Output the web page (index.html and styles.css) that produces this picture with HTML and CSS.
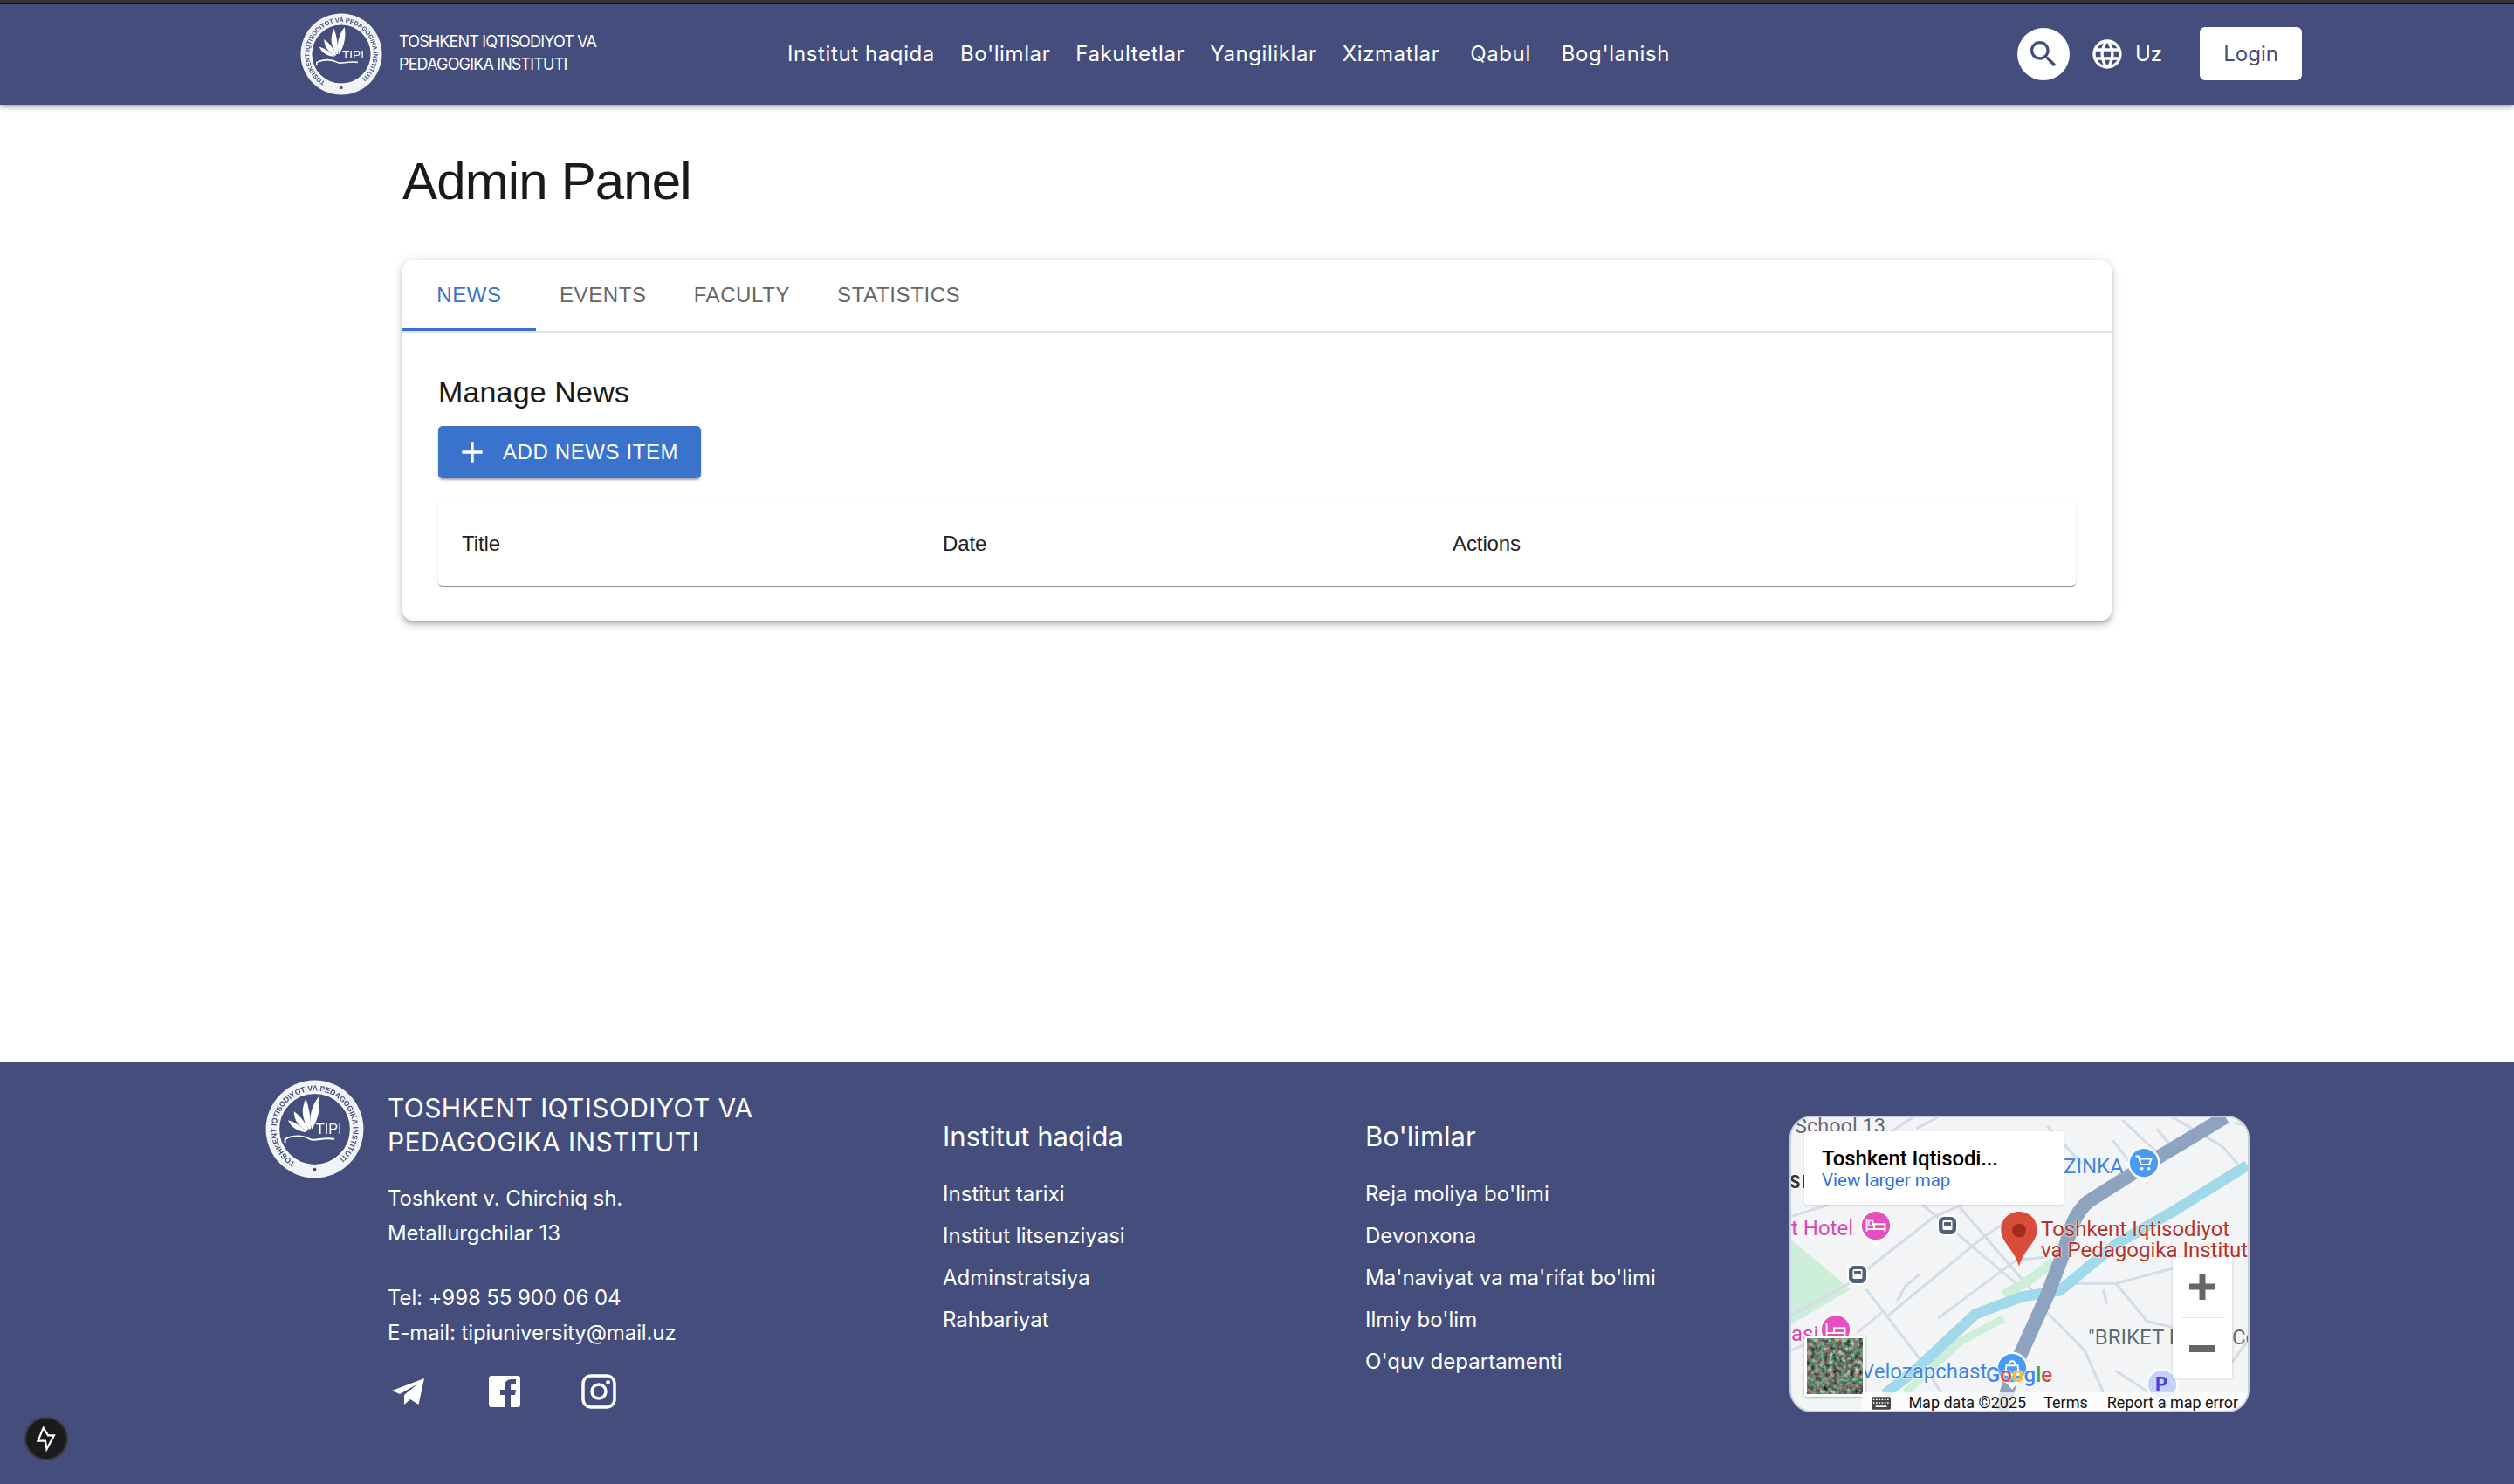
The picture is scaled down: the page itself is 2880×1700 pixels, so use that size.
FILE: index.html
```html
<!DOCTYPE html>
<html lang="uz">
<head>
<meta charset="utf-8">
<title>Admin Panel</title>
<link rel="stylesheet" href="styles.css">
</head>
<body>
<svg class="defs" width="0" height="0" aria-hidden="true">
  <defs>
    <path id="ringPath" d="M30.500 83.800A39 39 0 1 1 69.500 83.800"/>
    <filter id="sat" x="0" y="0" width="100%" height="100%" color-interpolation-filters="sRGB">
      <feTurbulence type="fractalNoise" baseFrequency=".2" numOctaves="3" seed="7"/>
      <feColorMatrix values="1.100 .3 0 0 -.27  .4 1 0 0 -.21  .5 .5 .1 0 -.12  0 0 0 0 1"/>
    </filter>
    <g id="seal">
      <circle cx="50" cy="50" r="49.500" fill="#f2f3f7"/>
      <circle cx="50" cy="50" r="36.500" fill="#444d7c" stroke="#fff" stroke-width="1.500"/>
      <text class="seal-ring" fill="#444d7c"><textPath href="#ringPath">TOSHKENT IQTISODIYOT VA PEDAGOGIKA INSTITUTI</textPath></text>
      <circle cx="50" cy="91" r="1.800" fill="#444d7c"/>
      <g fill="#fff">
        <path d="M47 50C44 38 46 28 54 17C56 28 54 40 47 50Z"/>
        <path d="M44 50C37 40 36 30 41 19C45 30 46 40 46 50Z"/>
        <path d="M42 52C34 47 29 41 29 32C36 37 41 44 44 51Z"/>
        <path d="M40 53C32 52 26 48 23 41C30 43 36 47 42 53Z"/>
      </g>
      <path d="M20 64V60C28 56 38 56 45 60C50 63 56 58 70 60" fill="none" stroke="#fff" stroke-width="1.700"/>
      <text x="51" y="55" class="seal-tipi" fill="#fff">TIPI</text>
    </g>
  </defs>
</svg>

<header class="topbar">
  <div class="topbar-inner">
    <a class="brand" href="#">
      <svg class="brand-seal" viewBox="0 0 100 100"><use href="#seal"/></svg>
      <span class="brand-name">TOSHKENT IQTISODIYOT VA<br>PEDAGOGIKA INSTITUTI</span>
    </a>
    <nav class="mainnav">
      <a href="#">Institut haqida</a>
      <a href="#">Bo'limlar</a>
      <a href="#">Fakultetlar</a>
      <a href="#">Yangiliklar</a>
      <a href="#">Xizmatlar</a>
      <a href="#" class="nav-qabul">Qabul</a>
      <a href="#" class="nav-bog">Bog'lanish</a>
    </nav>
    <div class="tools">
      <button class="search" aria-label="Search">
        <svg viewBox="0 0 24 24" class="search-icon"><path fill="#444d7c" d="M15.500 14h-.79l-.28-.27C15.410 12.590 16 11.110 16 9.500 16 5.910 13.090 3 9.500 3S3 5.910 3 9.500 5.910 16 9.500 16c1.610 0 3.090-.59 4.230-1.570l.27.28v.79l5 4.990L20.490 19l-4.990-5zm-6 0C7.010 14 5 11.990 5 9.500S7.010 5 9.500 5 14 7.010 14 9.500 11.990 14 9.500 14z"/></svg>
      </button>
      <span class="lang">
        <svg viewBox="0 0 24 24" class="globe"><path fill="#fff" d="M11.990 2C6.470 2 2 6.480 2 12s4.470 10 9.990 10C17.520 22 22 17.520 22 12S17.520 2 11.990 2zm6.930 6h-2.950c-.32-1.250-.78-2.450-1.380-3.560 1.840.63 3.370 1.910 4.330 3.560zM12 4.040c.83 1.200 1.480 2.530 1.910 3.960h-3.820c.43-1.430 1.080-2.760 1.910-3.960zM4.260 14C4.100 13.360 4 12.690 4 12s.1-1.360.26-2h3.380c-.08.66-.14 1.320-.14 2 0 .68.06 1.340.14 2H4.260zm.82 2h2.950c.32 1.250.78 2.450 1.380 3.560-1.840-.63-3.370-1.900-4.330-3.560zm2.950-8H5.080c.96-1.660 2.490-2.930 4.330-3.560C8.810 5.550 8.350 6.750 8.030 8zM12 19.960c-.83-1.200-1.480-2.530-1.910-3.960h3.820c-.43 1.430-1.080 2.760-1.910 3.960zM14.340 14H9.660c-.09-.66-.16-1.320-.16-2 0-.68.07-1.350.16-2h4.680c.09.650.16 1.320.16 2 0 .68-.07 1.340-.16 2zm.25 5.560c.6-1.110 1.060-2.310 1.380-3.560h2.950c-.96 1.650-2.490 2.930-4.330 3.560zM16.360 14c.08-.66.14-1.320.14-2 0-.68-.06-1.340-.14-2h3.380c.16.640.26 1.310.26 2s-.1 1.360-.26 2h-3.380z"/></svg>
        <span>Uz</span>
      </span>
      <button class="login">Login</button>
    </div>
  </div>
</header>

<main class="content">
  <h1 class="title">Admin Panel</h1>
  <section class="panel">
    <div class="tabs">
      <a class="tab tab-active" href="#">NEWS</a>
      <a class="tab" href="#">EVENTS</a>
      <a class="tab" href="#">FACULTY</a>
      <a class="tab" href="#">STATISTICS</a>
    </div>
    <div class="panel-body">
      <h2 class="subtitle">Manage News</h2>
      <button class="add">
        <svg viewBox="0 0 24 24" class="plus"><path d="M19 13h-6v6h-2v-6H5v-2h6V5h2v6h6z" fill="#fff"/></svg>
        ADD NEWS ITEM
      </button>
      <div class="table">
        <span class="th">Title</span>
        <span class="th">Date</span>
        <span class="th">Actions</span>
      </div>
    </div>
  </section>
</main>

<footer class="footer">
  <div class="footer-inner">
    <div class="f-about">
      <svg class="f-seal" viewBox="0 0 100 100"><use href="#seal"/></svg>
      <div class="f-info">
        <h3 class="f-name">TOSHKENT IQTISODIYOT VA<br>PEDAGOGIKA INSTITUTI</h3>
        <p class="f-line">Toshkent v. Chirchiq sh.</p>
        <p class="f-line">Metallurgchilar 13</p>
        <p class="f-line f-tel">Tel: +998 55 900 06 04</p>
        <p class="f-line">E-mail: tipiuniversity@mail.uz</p>
        <div class="socials">
          <svg viewBox="0 0 37 30" class="s-tg"><path d="M0 14L37 0L30.500 30L21 24L14 30L14 19L30 6L9 18Z" fill="#fff"/></svg>
          <svg viewBox="0 0 36 36" class="s-fb"><path fill="#fff" d="M3 0h30a3 3 0 0 1 3 3v30a3 3 0 0 1-3 3h-8V22h5l1-6h-6v-4c0-2 1-3 3-3h3V4h-5c-5 0-8 3-8 8v4h-5v6h5v14H3a3 3 0 0 1-3-3V3a3 3 0 0 1 3-3z"/></svg>
          <svg viewBox="0 0 40 40" class="s-ig"><rect x="2" y="2" width="36" height="36" rx="9" fill="none" stroke="#fff" stroke-width="3.500"/><circle cx="20" cy="20" r="8" fill="none" stroke="#fff" stroke-width="3.500"/><circle cx="30.500" cy="9.500" r="2.400" fill="#fff"/></svg>
        </div>
      </div>
    </div>
    <div class="f-col f-col-1">
      <h4 class="f-head">Institut haqida</h4>
      <a href="#">Institut tarixi</a>
      <a href="#">Institut litsenziyasi</a>
      <a href="#">Adminstratsiya</a>
      <a href="#">Rahbariyat</a>
    </div>
    <div class="f-col f-col-2">
      <h4 class="f-head">Bo'limlar</h4>
      <a href="#">Reja moliya bo'limi</a>
      <a href="#">Devonxona</a>
      <a href="#">Ma'naviyat va ma'rifat bo'limi</a>
      <a href="#">Ilmiy bo'lim</a>
      <a href="#">O'quv departamenti</a>
    </div>
    <div class="map">
      <svg class="map-art" viewBox="60 31 1462 1005" preserveAspectRatio="none">
        <rect x="60" y="31" width="1462" height="1005" fill="#f3f4f5"/>
        <path d="M60 450L250 620L60 740Z" fill="#cdeed8"/>
        <g fill="none" stroke="#d5dce6" stroke-width="9">
          <path d="M60 370L180 330M60 710L245 600L520 370L610 330M480 330L780 600M600 340L860 660M300 620L480 870L540 975"/>
          <path d="M370 710L665 450L760 380M530 720L780 520L870 510M270 770L350 700M400 660L425 610L470 570"/>
          <path d="M880 700L1000 830L1060 975M940 600L1100 600L1200 730L1280 750M1060 620L1070 670M1100 600L1520 480"/>
          <path d="M380 80L450 30M460 70L530 30M1090 110L1200 260M1120 40L1250 170M1230 70L1270 120M1280 30L1440 130L1490 190M1480 50L1520 60"/>
          <path d="M1100 900L1300 1040M1450 900L1520 800M1320 620L1380 740M600 120L760 300M880 60L990 190M60 830L200 760"/>
        </g>
        <g fill="none" stroke="#cdeed8">
          <path d="M900 525L820 590L740 640" stroke-width="32"/>
          <path d="M740 720L600 800L480 920L425 975" stroke-width="26"/>
        </g>
        <path d="M1521 195L1280 355L1100 465L920 625L800 645L650 705L470 885L360 980" fill="none" stroke="#a0d9ea" stroke-width="36"/>
        <path d="M1450 30L1240 165L1010 320C985 345 970 370 960 400L930 500L880 640L770 900L735 1036" fill="none" stroke="#8ea3bf" stroke-width="46"/>
      </svg>
      <span class="m-label m-school">School 13</span>
      <span class="m-label m-sk">SK</span>
      <span class="m-label m-zinka">ZINKA</span>
      <span class="m-label m-hotel">t Hotel</span>
      <span class="m-label m-asi">asi</span>
      <span class="m-label m-place">Toshkent Iqtisodiyot<br>va Pedagogika Institut</span>
      <span class="m-label m-briket">"BRIKET F</span>
      <span class="m-label m-co">Co</span>
      <span class="m-label m-velo">Velozapchast</span>
      <svg class="m-pin m-pin-cart" viewBox="0 0 40 46"><path d="M20 46L10 34H30Z" fill="#fff"/><circle cx="20" cy="20" r="19.500" fill="#fff"/><circle cx="20" cy="20" r="17" fill="#4b9bf5"/><path d="M10 12h3.500l3 10h10l2.500-7H15" fill="none" stroke="#fff" stroke-width="2.200"/><circle cx="17.500" cy="27" r="1.900" fill="#fff"/><circle cx="26" cy="27" r="1.900" fill="#fff"/></svg>
      <svg class="m-pin m-pin-hotel" viewBox="0 0 40 46"><path d="M20 46L10 34H30Z" fill="#fff"/><circle cx="20" cy="20" r="19.500" fill="#fff"/><circle cx="20" cy="20" r="17" fill="#e74fc0"/><path d="M9 12v15M9 24h22v3M31 24v-6H18v6" fill="none" stroke="#fff" stroke-width="2"/><rect x="11.500" y="14" width="5" height="6" fill="none" stroke="#fff" stroke-width="1.500"/></svg>
      <svg class="m-pin m-pin-hotel2" viewBox="0 0 40 46"><circle cx="20" cy="20" r="19.500" fill="#fff"/><circle cx="20" cy="20" r="17" fill="#e74fc0"/><path d="M9 12v15M9 24h22v3M31 24v-6H18v6" fill="none" stroke="#fff" stroke-width="2"/></svg>
      <svg class="m-pin m-bus1" viewBox="0 0 24 24"><rect x="1" y="1" width="22" height="22" rx="7" fill="#4f6079" stroke="#fff" stroke-width="2"/><rect x="6.500" y="6" width="11" height="11" rx="1.500" fill="#fff"/><rect x="8" y="8" width="8" height="4" fill="#4f6079"/></svg>
      <svg class="m-pin m-bus2" viewBox="0 0 24 24"><rect x="1" y="1" width="22" height="22" rx="7" fill="#4f6079" stroke="#fff" stroke-width="2"/><rect x="6.500" y="6" width="11" height="11" rx="1.500" fill="#fff"/><rect x="8" y="8" width="8" height="4" fill="#4f6079"/></svg>
      <svg class="m-pin m-pin-shop" viewBox="0 0 40 46"><path d="M20 46L10 34H30Z" fill="#fff"/><circle cx="20" cy="20" r="19.500" fill="#fff"/><circle cx="20" cy="20" r="17" fill="#4b9bf5"/><path d="M13 17h14l1 11H12zM16 17c0-7 8-7 8 0" fill="none" stroke="#fff" stroke-width="2"/></svg>
      <svg class="m-pin m-pin-park" viewBox="0 0 40 40"><circle cx="20" cy="20" r="19.500" fill="#fff"/><circle cx="20" cy="20" r="17" fill="#c4d3fb"/></svg>
      <span class="m-p">P</span>
      <svg class="m-pin m-marker" viewBox="0 0 42 64"><path d="M21 0C9 0 0 9 0 21C0 36 16 44 21 64C26 44 42 36 42 21C42 9 33 0 21 0Z" fill="#d94c3b"/><circle cx="21" cy="22" r="8" fill="#a32a1e"/></svg>
      <div class="m-card">
        <strong class="m-card-title">Toshkent Iqtisodi...</strong>
        <a href="#" class="m-card-link">View larger map</a>
      </div>
      <div class="m-zoom">
        <svg viewBox="0 0 30 30" class="m-z"><path d="M11.500 0h7v11.500H30v7H18.500V30h-7V18.500H0v-7h11.500z" fill="#666"/></svg>
        <i class="m-z-sep"></i>
        <svg viewBox="0 0 30 30" class="m-z m-z-minus"><path d="M0 11h30v8H0z" fill="#666"/></svg>
      </div>
      <span class="m-google"><b class="g1">G</b><b class="g2">o</b><b class="g3">o</b><b class="g1">g</b><b class="g4">l</b><b class="g2">e</b></span>
      <div class="m-thumb"><svg class="m-thumb-art" width="64" height="64"><rect width="64" height="64" filter="url(#sat)"/></svg></div>
      <div class="m-attr">
        <svg viewBox="0 0 24 16" class="m-kbd"><rect width="24" height="16" rx="2" fill="#444"/><path d="M2 3.500h20M2 7.500h20" stroke="#fff" stroke-width="1.500" stroke-dasharray="2 1.500"/><path d="M5 12h14" stroke="#fff" stroke-width="2"/></svg>
        <span class="m-attr-data">Map data ©2025</span>
        <span class="m-attr-terms">Terms</span>
        <span>Report a map error</span>
      </div>
    </div>
  </div>
  <div class="devbadge">
    <svg viewBox="85 68 147 147" class="bolt"><path d="M148 102L165 130H187L160 180L155 150H128Z" fill="none" stroke="#fff" stroke-width="7"/></svg>
  </div>
</footer>
</body>
</html>
```

FILE: styles.css
```css
* { box-sizing: border-box; }
html, body { margin: 0; padding: 0; height: 100%; }
body {
  font-family: "Liberation Sans", Arial, sans-serif;
  background: #fff;
  color: #1a1a1a;
  display: flex;
  flex-direction: column;
  height: 1700px;
  overflow: hidden;
}
a { color: inherit; text-decoration: none; }
p, h1, h2, h3, h4 { margin: 0; font-weight: 400; }
button { border: 0; padding: 0; font: inherit; }
.defs { position: absolute; }
.seal-ring { font: 700 7.600px "Liberation Sans", sans-serif; }
.seal-tipi { font: 400 14.500px "Liberation Sans", sans-serif; }

.topbar {
  height: 120px;
  flex: none;
  background: #444d7c;
  border-top: 4px solid #363636;
  box-shadow: inset 0 1px 0 #111, 0 2px 4px -1px rgba(0,0,0,.2), 0 4px 5px rgba(0,0,0,.14), 0 1px 10px rgba(0,0,0,.12);
  position: relative;
  z-index: 2;
}
.topbar-inner { display: flex; align-items: center; height: 116px; padding: 0 0 1px 344px; }
.brand { display: flex; align-items: center; color: #fff; width: 558px; flex: none; }
.brand-seal { width: 94px; height: 94px; flex: none; filter: blur(.5px); }
.brand-name {
  margin-left: 19px;
  font: 400 18px/26px "Inter", sans-serif;
  letter-spacing: -.85px;
  position: relative;
  top: -1px;
}
.mainnav {
  display: flex;
  color: #fff;
  font: 400 24px/30px "Inter", sans-serif;
  letter-spacing: .6px;
  gap: 29px;
  white-space: nowrap;
  width: 1409px;
  flex: none;
}
.nav-qabul { margin-left: 6px; }
.nav-bog { margin-left: 6px; }
.tools { display: flex; align-items: center; }
.search { width: 60px; height: 60px; border-radius: 50%; background: #fff; display: flex; align-items: center; justify-content: center; }
.search-icon { width: 40px; height: 40px; }
.lang { display: flex; align-items: center; color: #fff; margin-left: 23px; font: 400 24px "Inter", sans-serif; }
.globe { width: 40px; height: 40px; margin-right: 12px; }
.login { margin-left: 43px; width: 117px; height: 61px; border-radius: 6px; background: #fff; color: #444d7c; font: 400 24px "Inter", sans-serif; }

.content { flex: 1; padding: 52px 0 0 461px; }
.title { font-size: 60px; line-height: 72px; letter-spacing: -.85px; color: #1a1a1a; }
.panel {
  width: 1958px;
  height: 413px;
  margin-top: 54px;
  border-radius: 12px;
  background: #fff;
  box-shadow: 0 3px 5px -1px rgba(0,0,0,.2), 0 5px 8px rgba(0,0,0,.14), 0 1px 14px rgba(0,0,0,.12);
}
.tabs { display: flex; height: 84px; border-bottom: 3px solid #e2e2e2; }
.tab {
  display: flex; align-items: center; justify-content: center;
  font-size: 24px; letter-spacing: .6px; color: #666;
  height: 81px; padding: 2px 27px 0;
  border-bottom: 3px solid transparent;
}
.tab-active { color: #3a73cd; width: 153px; border-bottom-color: #3a73cd; padding: 2px 0 0; }
.panel-body { padding: 45px 41px 0; }
.subtitle { font-size: 34px; line-height: 44px; letter-spacing: .15px; }
.add {
  display: flex; align-items: center;
  margin-top: 17px;
  width: 301px; height: 60px;
  background: #3a73cd; color: #fff;
  border-radius: 5px;
  font-size: 24px; letter-spacing: .6px;
  padding-left: 19px;
  box-shadow: 0 3px 3px -2px rgba(0,0,0,.3), 0 2px 3px rgba(0,0,0,.2);
}
.plus { width: 40px; height: 40px; margin-right: 15px; }
.table {
  display: grid;
  grid-template-columns: 551px 584px 1fr;
  align-items: center;
  height: 96px;
  margin-top: 27px;
  padding-left: 27px;
  border-radius: 5px;
  box-shadow: 0 2px 1px -1px rgba(0,0,0,.3), 0 1px 1px rgba(0,0,0,.14), 0 1px 3px rgba(0,0,0,.12);
}
.th { font-size: 24px; color: #1e1e1e; letter-spacing: -.1px; }

.footer { height: 483px; flex: none; background: #444d7c; color: #fff; position: relative; }
.footer-inner { position: relative; display: flex; height: 100%; padding-left: 304px; font-family: "Inter", sans-serif; }
.f-about { display: flex; width: 776px; flex: none; padding-top: 20px; }
.f-seal { width: 113px; height: 113px; flex: none; filter: blur(.7px); }
.f-info { margin-left: 27px; padding-top: 13px; }
.f-name { font: 400 30px/38.500px "Inter", sans-serif; letter-spacing: .4px; margin-bottom: 26px; }
.f-line { font: 400 24px/40px "Inter", sans-serif; letter-spacing: -.1px; }
.f-tel { margin-top: 34px; }
.socials { display: flex; align-items: center; margin-top: 27px; padding-left: 5px; }
.s-tg { width: 37px; height: 30px; margin-right: 74px; }
.s-fb { width: 36px; height: 36px; margin-right: 70px; }
.s-ig { width: 40px; height: 40px; }
.f-col { display: flex; flex-direction: column; font: 400 24px/48px "Inter", sans-serif; letter-spacing: .03px; padding-top: 63px; flex: none; }
.f-col-1 { width: 484px; }
.f-col-2 { width: 486px; }
.f-head { font-size: 31px; line-height: 44px; margin-bottom: 20px; }

.map {
  position: relative;
  align-self: flex-start;
  margin-top: 61px;
  width: 527px; height: 340px;
  border-radius: 26px;
  border: 2px solid #c9cede;
  overflow: hidden;
  flex: none;
  background: #f3f4f5;
  font-family: "Roboto", sans-serif;
  letter-spacing: 0;
}
.map-art { position: absolute; inset: 0; width: 100%; height: 100%; }
.m-label {
  position: absolute; font-size: 24px; line-height: 24px; white-space: nowrap;
  text-shadow: 0 0 2px #fff, 0 0 2px #fff;
}
.m-school { left: 4px; top: -2px; color: #667; font-size: 23.500px; }
.m-sk { left: -2px; top: 62px; color: #333; font-weight: 700; font-size: 20px; letter-spacing: 2px; }
.m-zinka { left: 312px; top: 44px; color: #3f86e8; }
.m-hotel { left: 0; top: 115px; color: #d946b4; }
.m-asi { left: 0; top: 236px; color: #d946b4; }
.m-place { left: 286px; top: 116px; color: #b3322a; }
.m-briket { left: 340px; top: 240px; color: #5b6b7a; }
.m-co { left: 505px; top: 240px; color: #5b6b7a; }
.m-velo { left: 80px; top: 279px; color: #3f86e8; }
.m-pin { position: absolute; }
.m-pin-cart { left: 385px; top: 33px; width: 38px; height: 44px; }
.m-pin-hotel { left: 78px; top: 105px; width: 38px; height: 44px; }
.m-pin-hotel2 { left: 32px; top: 224px; width: 38px; height: 44px; }
.m-bus1 { left: 167px; top: 112px; width: 24px; height: 24px; }
.m-bus2 { left: 64px; top: 168px; width: 24px; height: 24px; }
.m-pin-shop { left: 234px; top: 268px; width: 38px; height: 44px; }
.m-pin-park { left: 406px; top: 287px; width: 38px; height: 38px; }
.m-p { position: absolute; left: 417px; top: 293px; font: 700 22px "Roboto", sans-serif; color: #4a3fe0; }
.m-marker { left: 239px; top: 108px; width: 44px; height: 63px; }
.m-card {
  position: absolute; left: 15px; top: 16px;
  width: 297px; height: 84px;
  background: #fff;
  border-radius: 3px;
  padding: 18px 20px;
  display: flex; flex-direction: column;
  box-shadow: 0 1px 3px rgba(0,0,0,.15);
}
.m-card-title { font: 500 24px/26px "Roboto", sans-serif; letter-spacing: -.15px; color: #000; }
.m-card-link { font: 400 20.500px/24px "Roboto", sans-serif; color: #2f6fe0; }
.m-zoom {
  position: absolute; left: 437px; top: 161px;
  width: 68px; height: 137px;
  background: #fff;
  display: flex; flex-direction: column; align-items: center;
  box-shadow: 0 1px 3px rgba(0,0,0,.18);
}
.m-z { width: 30px; height: 30px; margin: 18px 0 20px; }
.m-z-minus { margin: 20px 0 0; }
.m-z-sep { width: 51px; height: 1px; background: #e6e6e6; }
.m-thumb {
  position: absolute; left: 15px; top: 250px;
  width: 70px; height: 70px;
  border: 3px solid #fff;
  border-radius: 2px;
  overflow: hidden;
  box-shadow: 0 1px 3px rgba(0,0,0,.3);
}
.m-thumb-art { display: block; }
.m-google {
  position: absolute; left: 223px; top: 283px;
  font: 400 24px/24px "Roboto", sans-serif;
  text-shadow: 0 0 2px #fff, 0 0 2px #fff;
}
.m-google b { font-weight: 500; }
.g1 { color: #4285f4; }
.g2 { color: #ea4335; }
.g3 { color: #fbbc05; }
.g4 { color: #34a853; }
.m-attr {
  position: absolute; right: 0; bottom: -3px;
  display: flex; align-items: center;
  padding: 0 11px;
  background: rgba(255,255,255,.7);
  font: 400 18px/24px "Roboto", sans-serif;
  color: #111;
  white-space: nowrap;
}
.m-kbd { width: 22px; height: 15px; margin-right: 20px; }
.m-attr-data { margin-right: 20px; }
.m-attr-terms { margin-right: 22px; }

.devbadge {
  position: absolute; left: 28px; top: 406px;
  width: 50px; height: 50px; border-radius: 50%;
  background: #1b1b1d;
  border: 2px solid #3a3a3c;
  display: flex; align-items: center; justify-content: center;
}
.bolt { width: 46px; height: 46px; flex: none; }
```
